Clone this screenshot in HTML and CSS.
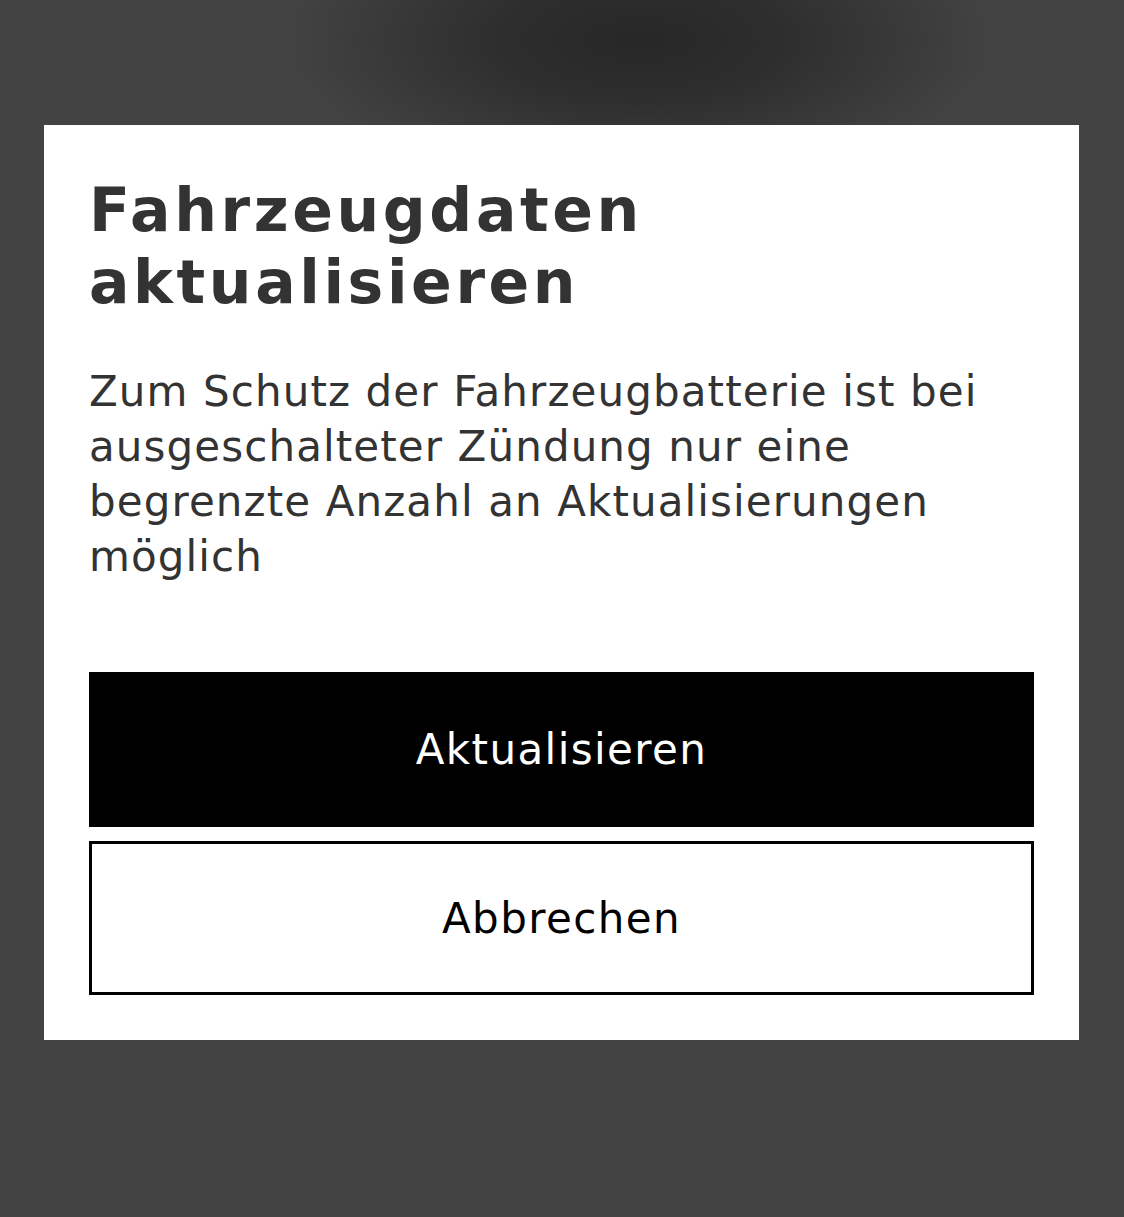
FILE: index.html
```html
<!DOCTYPE html>
<html lang="de">
<head>
<meta charset="utf-8">
<link rel="stylesheet" href="styles.css">
</head>
<body>
<div class="backdrop">
  <div class="dialog">
    <h1 class="title">Fahrzeugdaten<br>aktualisieren</h1>
    <p class="message">Zum Schutz der Fahrzeugbatterie ist bei ausgeschalteter Zündung nur eine begrenzte Anzahl an Aktualisierungen möglich</p>
    <div class="actions">
      <button class="btn btn-primary">Aktualisieren</button>
      <button class="btn btn-secondary">Abbrechen</button>
    </div>
  </div>
</div>
</body>
</html>
```
FILE: styles.css
```css
html, body {
  margin: 0;
  padding: 0;
  height: 100%;
}
body {
  background: #434343;
  font-family: "DejaVu Sans", "Noto Sans", sans-serif;
  overflow: hidden;
}
.backdrop {
  min-height: 1217px;
  padding-top: 125px;
  box-sizing: border-box;
  background:
    radial-gradient(ellipse 360px 150px at 640px 40px, #272727 0%, #2e2e2e 40%, rgba(67,67,67,0) 100%),
    #434343;
}
.dialog {
  width: 1035px;
  height: 915px;
  margin: 0 auto 0 44px;
  background: #ffffff;
  box-sizing: border-box;
  padding: 49px 45px 45px;
  display: flex;
  flex-direction: column;
}
.title {
  margin: 0;
  font-size: 60px;
  line-height: 72px;
  font-weight: 700;
  color: #333333;
  letter-spacing: 3.6px;
}
.message {
  margin: 46px 0 0;
  font-size: 42px;
  line-height: 55px;
  color: #333333;
  letter-spacing: 1.1px;
}
.actions {
  margin-top: auto;
  display: flex;
  flex-direction: column;
  gap: 14px;
}
.btn {
  height: 155px;
  width: 100%;
  font-family: inherit;
  font-size: 42px;
  letter-spacing: 1.4px;
  border: 3px solid #000;
  cursor: pointer;
}
.btn-primary {
  background: #000;
  color: #fff;
  height: 155px;
}
.btn-secondary {
  background: #fff;
  color: #000;
  height: 154px;
}
```
